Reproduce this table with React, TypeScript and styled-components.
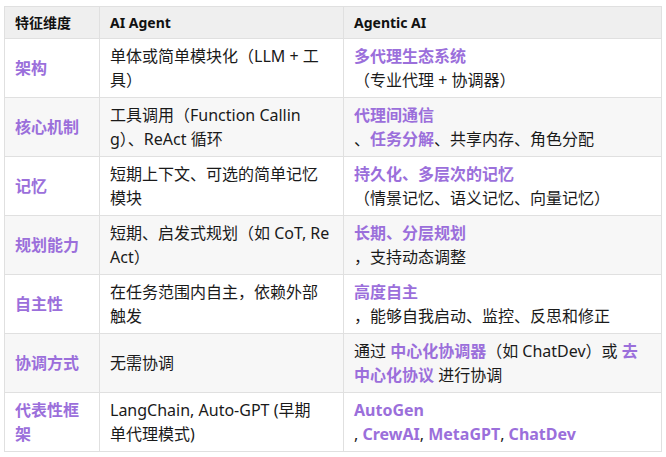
import React from "react";
import styled, { createGlobalStyle } from "styled-components";

const Global = createGlobalStyle`
  html, body { margin: 0; padding: 0; background: #ffffff; }
  body {
    font-family: "Noto Sans", "Noto Sans CJK SC", sans-serif;
    color: #1a1a1a;
  }
`;

const Page = styled.div`
  padding: 6px 5px 0 4px;
`;

const Table = styled.table`
  width: 657px;
  border-collapse: collapse;
  table-layout: fixed;
  border: 1px solid #e0e0e0;
`;

const HeadCell = styled.th`
  background: #efefef;
  border: 1px solid #e0e0e0;
  padding: 5px 10px;
  font-size: 14px;
  line-height: 21px;
  font-weight: 700;
  text-align: left;
  color: #111;
`;

const Row = styled.tr<{ $alt?: boolean }>`
  background: ${(p) => (p.$alt ? "#f7f7f7" : "#ffffff")};
`;

const Cell = styled.td`
  border: 1px solid #e0e0e0;
  padding: 5px 10px 5px 10px;
  font-size: 16px;
  line-height: 24px;
  vertical-align: middle;
  word-break: break-all;
  height: 48px;
`;

const Label = styled(Cell)`
  color: #9b6fdb;
  font-weight: 700;
  font-size: 16px;
`;

const Hi = styled.strong`
  color: #9b6fdb;
  font-weight: 700;
`;

const Line = styled.div``;

type RowData = {
  label: string;
  agent: React.ReactNode;
  agentic: React.ReactNode;
};

const rows: RowData[] = [
  {
    label: "架构",
    agent: "单体或简单模块化（LLM + 工具）",
    agentic: (
      <>
        <Line><Hi>多代理生态系统</Hi></Line>
        <Line>（专业代理 + 协调器）</Line>
      </>
    ),
  },
  {
    label: "核心机制",
    agent: "工具调用（Function Calling）、ReAct 循环",
    agentic: (
      <>
        <Line><Hi>代理间通信</Hi></Line>
        <Line>、<Hi>任务分解</Hi>、共享内存、角色分配</Line>
      </>
    ),
  },
  {
    label: "记忆",
    agent: "短期上下文、可选的简单记忆模块",
    agentic: (
      <>
        <Line><Hi>持久化、多层次的记忆</Hi></Line>
        <Line>（情景记忆、语义记忆、向量记忆）</Line>
      </>
    ),
  },
  {
    label: "规划能力",
    agent: "短期、启发式规划（如 CoT, ReAct）",
    agentic: (
      <>
        <Line><Hi>长期、分层规划</Hi></Line>
        <Line>，支持动态调整</Line>
      </>
    ),
  },
  {
    label: "自主性",
    agent: "在任务范围内自主，依赖外部触发",
    agentic: (
      <>
        <Line><Hi>高度自主</Hi></Line>
        <Line>，能够自我启动、监控、反思和修正</Line>
      </>
    ),
  },
  {
    label: "协调方式",
    agent: "无需协调",
    agentic: (
      <>
        通过 <Hi>中心化协调器</Hi>（如 ChatDev）或 <Hi>去中心化协议</Hi> 进行协调
      </>
    ),
  },
  {
    label: "代表性框架",
    agent: (
      <>
        <Line>LangChain, Auto-GPT (早期</Line>
        <Line>单代理模式)</Line>
      </>
    ),
    agentic: (
      <>
        <Line><Hi>AutoGen</Hi></Line>
        <Line>, <Hi>CrewAI</Hi>, <Hi>MetaGPT</Hi>, <Hi>ChatDev</Hi></Line>
      </>
    ),
  },
];

export default function App() {
  return (
    <>
      <Global />
      <Page>
        <Table>
          <colgroup>
            <col style={{ width: 95 }} />
            <col style={{ width: 244 }} />
            <col style={{ width: 318 }} />
          </colgroup>
          <thead>
            <tr>
              <HeadCell>特征维度</HeadCell>
              <HeadCell>AI Agent</HeadCell>
              <HeadCell>Agentic AI</HeadCell>
            </tr>
          </thead>
          <tbody>
            {rows.map((r, i) => (
              <Row key={r.label} $alt={i % 2 === 1}>
                <Label>{r.label}</Label>
                <Cell>{r.agent}</Cell>
                <Cell>{r.agentic}</Cell>
              </Row>
            ))}
          </tbody>
        </Table>
      </Page>
    </>
  );
}
